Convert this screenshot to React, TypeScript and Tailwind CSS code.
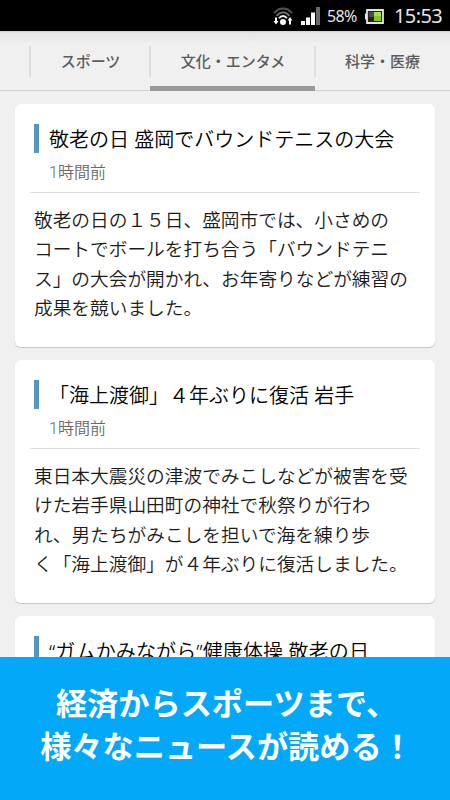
const FONT = "font-[Roboto,'Noto_Sans_CJK_JP',sans-serif]";

type Article = { title: string; titleClass?: string; time?: string; lines?: string[] };

const articles: Article[] = [
  {
    title: "敬老の日 盛岡でバウンドテニスの大会",
    time: "1時間前",
    lines: [
      "敬老の日の１５日、盛岡市では、小さめの",
      "コートでボールを打ち合う「バウンドテニ",
      "ス」の大会が開かれ、お年寄りなどが練習の",
      "成果を競いました。",
    ],
  },
  {
    title: "「海上渡御」４年ぶりに復活 岩手",
    time: "1時間前",
    lines: [
      "東日本大震災の津波でみこしなどが被害を受",
      "けた岩手県山田町の神社で秋祭りが行わ",
      "れ、男たちがみこしを担いで海を練り歩",
      "く「海上渡御」が４年ぶりに復活しました。",
    ],
  },
  { title: "“ガムかみながら”健康体操 敬老の日", titleClass: "tracking-[0.13px]" },
];

function WifiIcon() {
  return (
    <svg width="20" height="19" viewBox="0 0 20 19" fill="none">
      <path d="M1 6.200C6-.2 14-.2 19 6.200" stroke="#555" strokeWidth="2" />
      <path d="M3.600 8.900c3.600-4.600 9.200-4.600 12.800 0" stroke="#777" strokeWidth="1.800" />
      <path d="M6 11.200c2.200-3 5.800-3 8 0" stroke="#f2f2f2" strokeWidth="1.900" />
      <circle cx="10" cy="15" r="3" fill="#fff" />
      <path d="M3 10.500v5M17 12.500v5" stroke="#fff" strokeWidth="2" />
      <path d="M.5 14h5L3 17.500zM14.500 13.500h5L17 10z" fill="#fff" />
    </svg>
  );
}

function SignalIcon() {
  return (
    <svg width="19" height="18" viewBox="0 0 19 18">
      <path d="M0 14h4v4H0zM5 10.500h4V18H5zM10 5.500h4V18h-4z" fill="#fff" />
      <path d="M15 0h4v18h-4z" fill="#6a6a6a" />
    </svg>
  );
}

function BatteryIcon() {
  return (
    <svg width="19" height="15" viewBox="0 0 19 15">
      <path d="M0 4.500h2v6H0z" fill="#e8e8e8" />
      <path d="M2 1h16v13H2z" fill="#222" stroke="#e4e4e4" strokeWidth="1.800" />
      <path d="M4 3h5v5H4z" fill="#4b4b4b" />
      <path d="M9 3h7v9H9z" fill="#83c81e" />
      <path d="M9 3h7v4H9z" fill="#a5df46" />
    </svg>
  );
}

function StatusBar() {
  return (
    <div className="flex h-[31px] shrink-0 items-center bg-black pr-2 font-['Noto_Sans',sans-serif] text-[#e6e6e6]">
      <div className="ml-auto flex items-center pt-px">
        <WifiIcon />
        <span className="ml-2"><SignalIcon /></span>
        <span className="ml-[7px] w-[31px] whitespace-nowrap text-base leading-5 tracking-[-0.6px]">58%</span>
        <span className="ml-[7px]"><BatteryIcon /></span>
        <span className="ml-[10px] w-[48px] whitespace-nowrap text-xl leading-5 tracking-[-0.6px]">15:53</span>
      </div>
    </div>
  );
}

function Divider() {
  return <span className="-ml-px mt-[15px] h-[31px] w-0.5 bg-[#dedede]" />;
}

function Tabs() {
  return (
    <nav className="flex h-[60px] shrink-0 bg-[linear-gradient(#cfcfcf,#e6e6e6_2px,#f0f0f0_13px)] text-[15px] font-medium leading-[62px] text-[#5c5c5c]">
      <div className="w-[30px] border-b border-[#d0d0d0]" />
      <div className="flex w-[120px] border-b border-[#d0d0d0]">
        <Divider />
        <span className="flex-1 text-center">スポーツ</span>
      </div>
      <div className="flex w-[165px] border-b-[5px] border-[#999]">
        <Divider />
        <span className="flex-1 text-center">文化・エンタメ</span>
      </div>
      <div className="flex flex-1 border-b border-[#d0d0d0]">
        <Divider />
        <span className="ml-[29px] whitespace-nowrap">科学・医療</span>
      </div>
    </nav>
  );
}

function Card({ article }: { article: Article }) {
  return (
    <article className="h-[243px] shrink-0 rounded-md bg-white shadow-[0_1px_1px_rgba(0,0,0,0.18)]">
      <div className="flex h-[51px] pl-[19px] pt-5">
        <span className="h-[29px] w-[5px] bg-[#5497c3]" />
        <h2
          className={`ml-[10px] whitespace-nowrap pt-px font-['Noto_Sans','Noto_Sans_CJK_JP',sans-serif] text-xl font-[350] leading-[29px] text-black ${article.titleClass ?? ""}`}
        >
          {article.title}
        </h2>
      </div>
      {article.time && (
        <>
          <p className="ml-[34px] mt-1.5 text-base font-[350] leading-6 text-[#6a6a6a]">{article.time}</p>
          <hr className="mx-[15px] mt-[7px] border-[#dedede]" />
        </>
      )}
      {article.lines && (
        <div className="ml-[19px] mt-[14px] whitespace-nowrap text-[18.7px] font-[350] leading-[29.3px] text-[#1c1c1c]">
          {article.lines.map((line) => (
            <p key={line}>{line}</p>
          ))}
        </div>
      )}
    </article>
  );
}

export default function App() {
  return (
    <div className={`flex h-[800px] w-[450px] flex-col overflow-hidden bg-[#f0f0f0] ${FONT}`}>
      <StatusBar />
      <Tabs />
      <main className="flex min-h-0 flex-1 flex-col gap-[13px] overflow-hidden px-[15px] pt-[13px]">
        {articles.map((article) => (
          <Card key={article.title} article={article} />
        ))}
      </main>
      <footer className="h-[143px] shrink-0 bg-[#03a9f8] pl-[3px] pt-[26px] text-center text-[31.2px] font-bold leading-[43px] text-white">
        <p>経済からスポーツまで、</p>
        <p>様々なニュースが読める！</p>
      </footer>
    </div>
  );
}
